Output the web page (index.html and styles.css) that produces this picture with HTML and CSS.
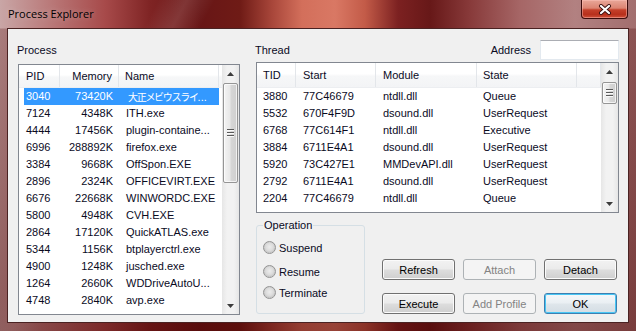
FILE: index.html
```html
<!DOCTYPE html>
<html lang="en">
  <head>
    <meta charset="UTF-8" />
    <title>Process Explorer</title>
    <link rel="stylesheet" href="styles.css">
  </head>
  <body>
    <div class="window">
      <div class="titlebar">
        <span class="title">Process Explorer</span>
        <div class="close">
          <svg width="14" height="11" viewBox="0 0 14 11">
            <path d="M3 2 L11 9 M11 2 L3 9" stroke="#3a1010" stroke-width="4" stroke-linecap="round" />
            <path d="M3 2 L11 9 M11 2 L3 9" stroke="#ffffff" stroke-width="2.2" stroke-linecap="round" />
          </svg>
        </div>
      </div>

      <div class="client">
        <div class="left">
          <div class="caption">Process</div>
          <div class="listview proc">
            <div class="lv-body">
              <div class="lv-head">
                <span class="h-pid">PID</span>
                <span class="h-mem">Memory</span>
                <span class="h-name">Name</span>
              </div>
              <div class="lv-rows">
                <div class="prow selected"><span>3040</span><span class="mem">73420K</span><span class="name"><span class="cjk">大正メビウスライ</span>...</span></div>
                <div class="prow"><span>7124</span><span class="mem">4348K</span><span class="name">ITH.exe</span></div>
                <div class="prow"><span>4444</span><span class="mem">17456K</span><span class="name">plugin-containe...</span></div>
                <div class="prow"><span>6996</span><span class="mem">288892K</span><span class="name">firefox.exe</span></div>
                <div class="prow"><span>3384</span><span class="mem">9668K</span><span class="name">OffSpon.EXE</span></div>
                <div class="prow"><span>2896</span><span class="mem">2324K</span><span class="name">OFFICEVIRT.EXE</span></div>
                <div class="prow"><span>6676</span><span class="mem">22668K</span><span class="name">WINWORDC.EXE</span></div>
                <div class="prow"><span>5800</span><span class="mem">4948K</span><span class="name">CVH.EXE</span></div>
                <div class="prow"><span>2864</span><span class="mem">17120K</span><span class="name">QuickATLAS.exe</span></div>
                <div class="prow"><span>5344</span><span class="mem">1156K</span><span class="name">btplayerctrl.exe</span></div>
                <div class="prow"><span>4900</span><span class="mem">1248K</span><span class="name">jusched.exe</span></div>
                <div class="prow"><span>1264</span><span class="mem">2660K</span><span class="name">WDDriveAutoU...</span></div>
                <div class="prow"><span>4748</span><span class="mem">2840K</span><span class="name">avp.exe</span></div>
              </div>
            </div>
            <div class="vscroll">
              <div class="arrow"><svg width="7" height="4" viewBox="0 0 7 4"><path d="M0 4 L3.5 0 L7 4 Z" fill="#3c3c3c" /></svg></div>
              <div class="track">
                <div class="thumb long"><i></i><i></i><i></i></div>
              </div>
              <div class="arrow"><svg width="7" height="4" viewBox="0 0 7 4"><path d="M0 0 L7 0 L3.5 4 Z" fill="#3c3c3c" /></svg></div>
            </div>
          </div>
        </div>

        <div class="right">
          <div class="toprow">
            <span class="caption">Thread</span>
            <span class="address">
              <label for="addr">Address</label>
              <input type="text" id="addr" />
            </span>
          </div>

          <div class="listview thread">
            <div class="lv-body">
              <div class="lv-head">
                <span class="h-tid">TID</span>
                <span class="h-start">Start</span>
                <span class="h-mod">Module</span>
                <span class="h-state">State</span>
                <span class="h-rest"></span>
              </div>
              <div class="lv-rows">
                <div class="trow"><span>3880</span><span>77C46679</span><span>ntdll.dll</span><span>Queue</span></div>
                <div class="trow"><span>5532</span><span>670F4F9D</span><span>dsound.dll</span><span>UserRequest</span></div>
                <div class="trow"><span>6768</span><span>77C614F1</span><span>ntdll.dll</span><span>Executive</span></div>
                <div class="trow"><span>3884</span><span>6711E4A1</span><span>dsound.dll</span><span>UserRequest</span></div>
                <div class="trow"><span>5920</span><span>73C427E1</span><span>MMDevAPI.dll</span><span>UserRequest</span></div>
                <div class="trow"><span>2792</span><span>6711E4A1</span><span>dsound.dll</span><span>UserRequest</span></div>
                <div class="trow"><span>2204</span><span>77C46679</span><span>ntdll.dll</span><span>Queue</span></div>
              </div>
            </div>
            <div class="vscroll">
              <div class="arrow"><svg width="7" height="4" viewBox="0 0 7 4"><path d="M0 4 L3.5 0 L7 4 Z" fill="#3c3c3c" /></svg></div>
              <div class="track">
                <div class="thumb short"><i></i><i></i><i></i></div>
              </div>
              <div class="arrow"><svg width="7" height="4" viewBox="0 0 7 4"><path d="M0 0 L7 0 L3.5 4 Z" fill="#3c3c3c" /></svg></div>
            </div>
          </div>

          <div class="bottom">
            <fieldset class="group">
              <legend>Operation</legend>
              <label class="radio r1"><span class="dot"></span>Suspend</label>
              <label class="radio r2"><span class="dot"></span>Resume</label>
              <label class="radio r3"><span class="dot"></span>Terminate</label>
            </fieldset>
            <div class="buttons">
              <button class="btn">Refresh</button>
              <button class="btn" disabled>Attach</button>
              <button class="btn">Detach</button>
              <button class="btn">Execute</button>
              <button class="btn" disabled>Add Profile</button>
              <button class="btn default">OK</button>
            </div>
          </div>
        </div>
      </div>
    </div>
  </body>
</html>
```

FILE: styles.css
```css
* {
  box-sizing: border-box;
}

body {
  margin: 0;
  font-family: "Liberation Sans", Arial, sans-serif;
  font-size: 11px;
  color: #0a0a1e;
  background: #6a1a1a;
}

.window {
  width: 636px;
  height: 331px;
  display: flex;
  flex-direction: column;
  padding: 0 7px 8px;
  background:
    linear-gradient(180deg, rgba(0, 0, 0, 0) 0, rgba(0, 0, 0, 0) 28px, rgba(70, 0, 0, 0.25) 29px, rgba(70, 0, 0, 0.45) 100%),
    linear-gradient(118deg, rgba(255, 255, 255, 0) 140px, rgba(255, 255, 255, 0.12) 165px, rgba(255, 255, 255, 0) 190px),
    linear-gradient(90deg, #c9a6a6 0, #b87575 55px, #a74a4a 105px, #7f2424 150px, #681616 200px, #6f1b16 240px, #a8463a 272px, #d36f5b 302px, #d97864 335px, #c35b48 365px, #7c2121 398px, #671818 430px, #883a3a 470px, #a66666 520px, #b28181 575px, #a26e6e 636px);
}

/* title bar */
.titlebar {
  height: 28px;
  display: flex;
  justify-content: space-between;
  align-items: flex-start;
}

.title {
  font-family: "Open Sans", sans-serif;
  font-size: 11px;
  line-height: 15px;
  padding: 6px 0 0 1px;
  color: #000;
  text-shadow: 0 0 6px rgba(255, 255, 255, 0.35);
}

.close {
  width: 47px;
  height: 19px;
  margin-right: 1px;
  border: 1px solid #3b0c0c;
  border-top: none;
  border-radius: 0 0 4px 4px;
  background: linear-gradient(180deg, #e9a799 0, #dc8472 45%, #c4402a 55%, #b8301c 80%, #d0503a 100%);
  box-shadow: inset 0 0 0 1px rgba(255, 200, 190, 0.45);
  display: flex;
  align-items: center;
  justify-content: center;
}

/* client area */
.client {
  flex: 1;
  display: flex;
  background: #f0f0f0;
  border: 1px solid #4a2222;
  padding: 11px 0 0 10px;
}

.caption {
  height: 20px;
  line-height: 20px;
  margin-left: -1px;
}

.left {
  width: 222px;
}

.left .caption {
  margin-bottom: 4px;
}

.right {
  width: 363px;
  margin-left: 16px;
}

.toprow {
  height: 20px;
  display: flex;
  justify-content: space-between;
  align-items: center;
}

.address {
  display: flex;
  align-items: center;
}

.address label {
  margin-right: 9px;
}

.address input {
  width: 79px;
  height: 20px;
  border: 1px solid #e3e9ef;
  border-top-color: #abadb3;
  background: #fff;
  font: inherit;
}

/* list views */
.listview {
  display: flex;
  border: 1px solid #828790;
  background: #fff;
}

.listview.proc {
  height: 251px;
}

.listview.thread {
  height: 151px;
  margin-top: 2px;
}

.lv-body {
  flex: 1;
  overflow: hidden;
}

.lv-head {
  display: flex;
  height: 23px;
  line-height: 23px;
  background: linear-gradient(180deg, #ffffff 0, #ffffff 45%, #f6f7f8 55%, #f3f4f6 100%);
  border-bottom: 1px solid #eceef1;
  white-space: nowrap;
}

.thread .lv-head {
  height: 25px;
  line-height: 25px;
}

.lv-head span {
  border-right: 1px solid #e3e6ea;
  height: 100%;
}

.h-pid { width: 41px; padding-left: 7px; }
.h-mem { width: 59px; text-align: right; padding-right: 6px; }
.h-name { width: 100px; padding-left: 6px; }

.h-tid { width: 39px; padding-left: 6px; }
.h-start { width: 80px; padding-left: 7px; }
.h-mod { width: 101px; padding-left: 7px; }
.h-state { width: 100px; padding-left: 6px; }
.h-rest { width: 24px; }

.prow {
  display: grid;
  grid-template-columns: 35px 60px 100px;
  height: 17px;
  line-height: 17px;
  margin-left: 5px;
  width: 195px;
  white-space: nowrap;
}

.prow span:first-child {
  padding-left: 2px;
}

.prow .mem {
  text-align: right;
  padding-right: 6px;
}

.prow .name {
  padding-left: 7px;
  overflow: hidden;
}

.prow.selected {
  background: #3399ff;
  color: #fff;
}

.cjk {
  font-family: "Noto Sans CJK JP", sans-serif;
  font-size: 10px;
  letter-spacing: -1.3px;
}

.trow {
  display: grid;
  grid-template-columns: 39px 80px 101px 100px;
  height: 17px;
  line-height: 17px;
  white-space: nowrap;
}

.trow span:nth-child(1) { padding-left: 6px; }
.trow span:nth-child(2) { padding-left: 7px; }
.trow span:nth-child(3) { padding-left: 7px; }
.trow span:nth-child(4) { padding-left: 6px; }

/* scrollbars */
.vscroll {
  width: 17px;
  display: flex;
  flex-direction: column;
  background: linear-gradient(90deg, #e6e6e6 0, #f2f2f2 30%, #f2f2f2 70%, #e6e6e6 100%);
}

.arrow {
  height: 17px;
  display: flex;
  align-items: center;
  justify-content: center;
}

.track {
  flex: 1;
}

.thumb {
  margin: 1px 1px 0;
  border: 1px solid #959595;
  border-radius: 2px;
  background: linear-gradient(90deg, #f4f4f4 0, #e8e8e8 45%, #d6d6d6 55%, #cfcfcf 100%);
  box-shadow: inset 0 0 0 1px rgba(255, 255, 255, 0.7);
  display: flex;
  flex-direction: column;
  align-items: center;
  justify-content: center;
  gap: 1px;
}

.thumb.long {
  height: 100px;
}

.thumb.short {
  margin-top: 2px;
  height: 22px;
}

.thumb i {
  display: block;
  width: 7px;
  height: 1px;
  background: #5a5a5a;
  box-shadow: 0 1px 0 #fafafa;
  margin-bottom: 1px;
}

/* operation group and buttons */
.bottom {
  display: flex;
  align-items: flex-end;
  margin-top: 5px;
}

.group {
  width: 109px;
  height: 96px;
  margin: 0;
  padding: 0 0 0 6px;
  border: 1px solid #d5dfe5;
  border-radius: 3px;
}

.group legend {
  padding: 0 1px;
  line-height: 15px;
}

.radio {
  display: flex;
  align-items: center;
  height: 17px;
}

.r1 { margin-top: 6px; }
.r2 { margin-top: 7px; }
.r3 { margin-top: 4px; }

.dot {
  width: 13px;
  height: 13px;
  border-radius: 50%;
  border: 1px solid #939393;
  margin-right: 3px;
  background: radial-gradient(circle at 50% 45%, #ececec 0, #dcdcdc 45%, #c8c8c8 70%, #eeeeee 75%, #f6f6f6 100%);
}

.buttons {
  display: grid;
  grid-template-columns: repeat(3, 73px);
  column-gap: 8px;
  row-gap: 13px;
  margin-left: 17px;
}

.btn {
  height: 21px;
  padding: 0;
  border: 1px solid #707070;
  border-radius: 3px;
  font: inherit;
  color: #000;
  background: linear-gradient(180deg, #f2f2f2 0, #ebebeb 48%, #dddddd 52%, #cfcfcf 100%);
  box-shadow: inset 0 0 0 1px #fbfbfb;
}

.btn:disabled {
  border-color: #adb2b5;
  background: #f4f4f4;
  color: #838383;
  box-shadow: none;
}

.btn.default {
  border-color: #3c7fb1;
  box-shadow: inset 0 0 0 1px #48c6f4;
  background: linear-gradient(180deg, #f4f7fa 0, #eaeff3 48%, #dfe6eb 52%, #d4dde4 100%);
}
```
